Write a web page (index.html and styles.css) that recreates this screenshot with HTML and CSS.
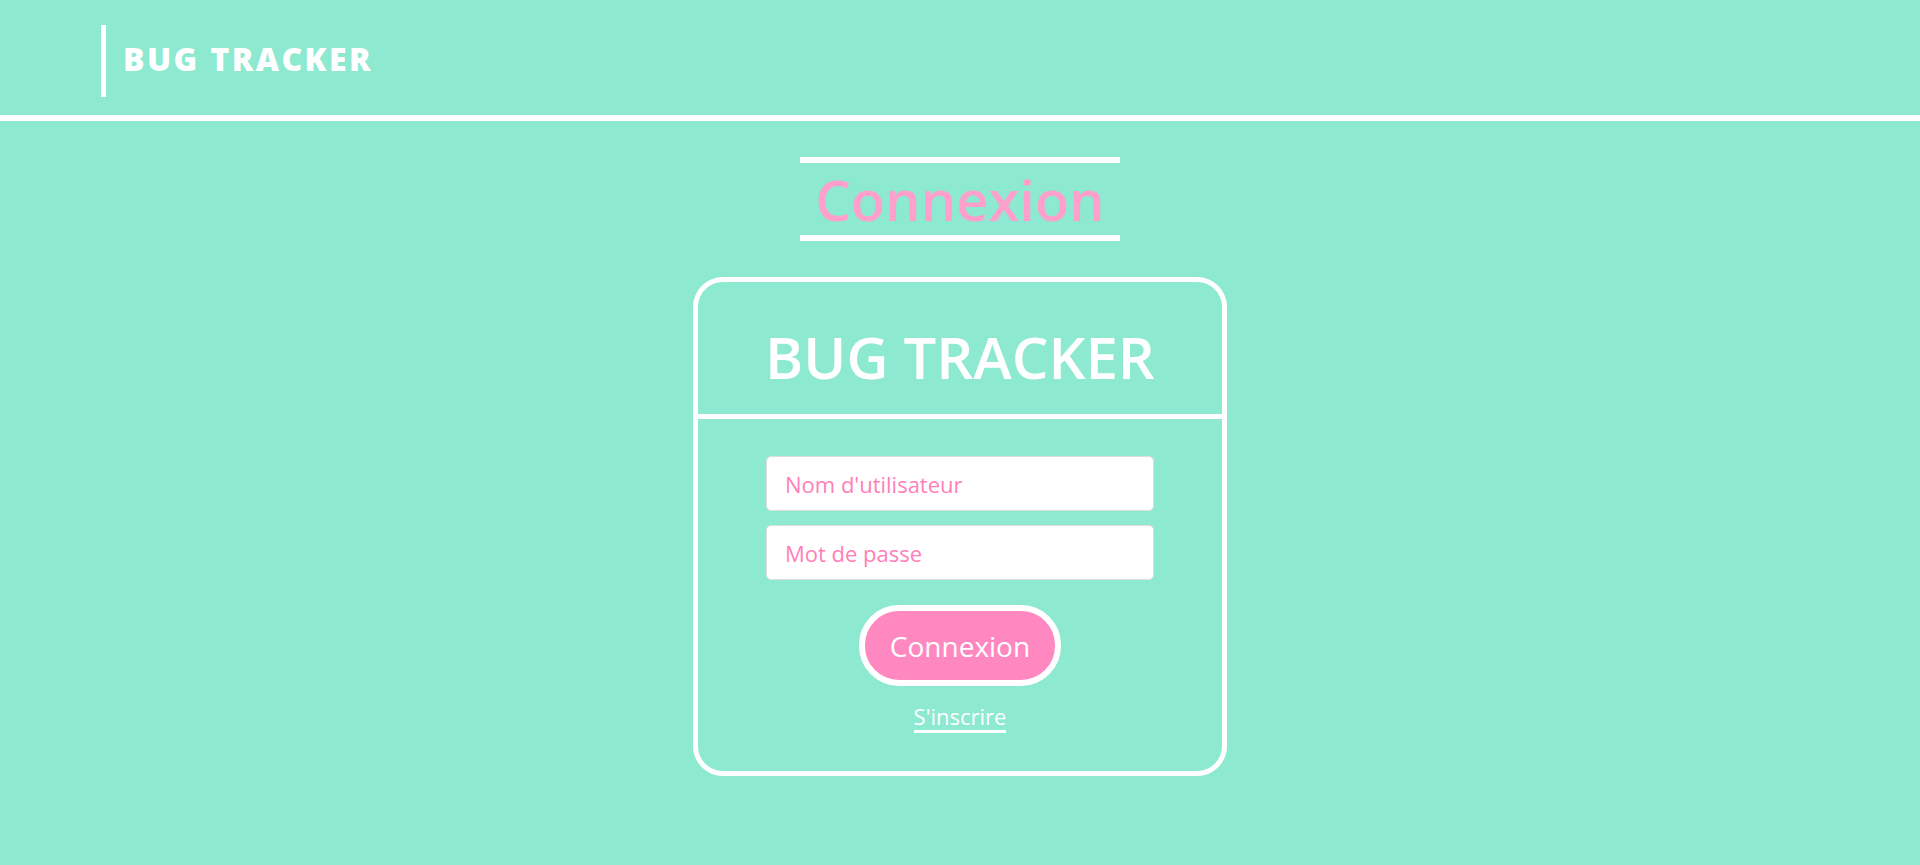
FILE: index.html
```html
<!DOCTYPE html>
<html lang="fr">
<head>
    <meta charset="UTF-8">
    <meta name="viewport" content="width=device-width, initial-scale=1.0">
    <title>Bug Tracker - Connexion</title>
    <link rel="stylesheet" href="styles.css">
</head>
<body>
    <header class="topbar">
        <div class="brand">BUG TRACKER</div>
    </header>

    <main class="page">
        <h1 class="page-title">Connexion</h1>

        <div class="login-card">
            <div class="login-card-header">
                <h2>BUG TRACKER</h2>
            </div>
            <form class="login-form" onsubmit="return false;">
                <input type="text" class="field" placeholder="Nom d'utilisateur">
                <input type="password" class="field" placeholder="Mot de passe">
                <button type="submit" class="btn-login">Connexion</button>
                <a href="#" class="signup-link">S'inscrire</a>
            </form>
        </div>
    </main>
</body>
</html>
```

FILE: styles.css
```css
body {
    margin: 0;
    background-color: #8de9d0;
    font-family: "Open Sans", "Noto Sans", sans-serif;
    color: white;
}

.topbar {
    height: 90px;
    padding: 25px 0 0 101px;
    border-bottom: 6px solid white;
    display: flex;
    align-items: flex-start;
}

.brand {
    height: 66px;
    padding-bottom: 6px;
    border-left: 5px solid white;
    padding-left: 17px;
    display: flex;
    align-items: center;
    font-size: 32px;
    font-weight: 800;
    letter-spacing: 2.4px;
}

.page {
    display: flex;
    flex-direction: column;
    align-items: center;
}

.page-title {
    margin: 36px 0 0;
    width: 320px;
    border-top: 6px solid white;
    border-bottom: 6px solid white;
    text-align: center;
    font-size: 56px;
    font-weight: 600;
    line-height: 72px;
    color: #ff9fcb;
}

.login-card {
    margin-top: 36px;
    width: 524px;
    height: 489px;
    border: 5px solid white;
    border-radius: 30px;
}

.login-card-header {
    border-bottom: 5px solid white;
    height: 137px;
    box-sizing: border-box;
    padding-top: 35px;
}

.login-card-header h2 {
    margin: 0;
    text-align: center;
    font-size: 58px;
    font-weight: 600;
    line-height: 80px;
}

.login-form {
    display: flex;
    flex-direction: column;
    align-items: center;
    padding-top: 37px;
}

.field {
    width: 388px;
    height: 55px;
    box-sizing: border-box;
    border: 1px solid #ddd;
    border-radius: 5px;
    padding: 0 18px;
    margin-bottom: 14px;
    font-family: inherit;
    font-size: 22px;
    color: #ff80b8;
    background-color: white;
}

.field::placeholder {
    color: #ff80b8;
}

.btn-login {
    margin-top: 11px;
    width: 202px;
    height: 81px;
    border: 6px solid white;
    border-radius: 40px;
    background-color: #ff88c0;
    color: white;
    font-family: inherit;
    font-size: 28px;
    cursor: pointer;
}

.signup-link {
    margin-top: 16px;
    color: white;
    text-decoration: none;
    font-size: 22px;
    line-height: 28px;
    border-bottom: 3px solid white;
}
```
